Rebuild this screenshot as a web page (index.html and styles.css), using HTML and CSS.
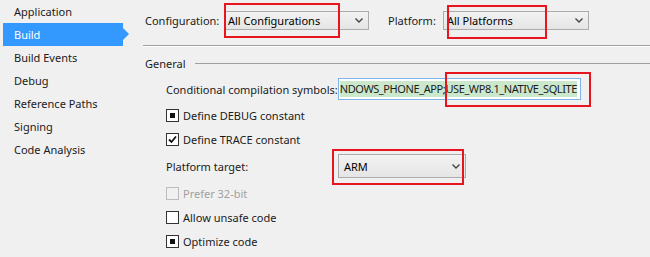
FILE: index.html
```html
<!DOCTYPE html>
<html lang="en">

<head>
    <meta charset="UTF-8">
    <meta name="viewport" content="width=device-width, initial-scale=1.0">
    <title>Build</title>

    <link rel="stylesheet" href="styles.css">
</head>

<body>
    <div class="page">
        <ul class="tabs">
            <li>Application</li>
            <li class="active">Build</li>
            <li>Build Events</li>
            <li>Debug</li>
            <li>Reference Paths</li>
            <li>Signing</li>
            <li>Code Analysis</li>
        </ul>

        <div class="main">
            <div class="toolbar">
                <span class="label">Configuration:</span>
                <div class="combo combo-config">
                    <span>All Configurations</span>
                    <svg class="chevron" width="8" height="5" viewBox="0 0 8 5"><path d="M0.5 0.5 L4 4 L7.5 0.5" fill="none" stroke="#444" stroke-width="1.4"/></svg>
                    <div class="mark mark-config"></div>
                </div>
                <span class="label label-platform">Platform:</span>
                <div class="combo combo-platform">
                    <span>All Platforms</span>
                    <svg class="chevron" width="8" height="5" viewBox="0 0 8 5"><path d="M0.5 0.5 L4 4 L7.5 0.5" fill="none" stroke="#444" stroke-width="1.4"/></svg>
                    <div class="mark mark-platform"></div>
                </div>
            </div>

            <div class="rule"></div>

            <div class="group-title">
                <span>General</span>
                <div class="group-line"></div>
            </div>

            <div class="settings">
                <div class="field">
                    <span class="field-label">Conditional compilation symbols:</span>
                    <div class="textbox">
                        <div class="textbox-inner">
                            <span class="selected">NDOWS_PHONE_APP;USE_WP8.1_NATIVE_SQLITE</span>
                        </div>
                        <div class="mark mark-symbols"></div>
                    </div>
                </div>

                <label class="check">
                    <span class="box box-square"></span>
                    Define DEBUG constant
                </label>
                <label class="check">
                    <span class="box">
                        <svg width="11" height="11" viewBox="0 0 11 11"><path d="M2 5.5 L4.5 8 L9 2.5" fill="none" stroke="#111" stroke-width="1.8"/></svg>
                    </span>
                    Define TRACE constant
                </label>

                <div class="field field-target">
                    <span class="field-label">Platform target:</span>
                    <div class="combo combo-target">
                        <span>ARM</span>
                        <svg class="chevron" width="8" height="5" viewBox="0 0 8 5"><path d="M0.5 0.5 L4 4 L7.5 0.5" fill="none" stroke="#444" stroke-width="1.4"/></svg>
                        <div class="mark mark-target"></div>
                    </div>
                </div>

                <label class="check disabled">
                    <span class="box"></span>
                    Prefer 32-bit
                </label>
                <label class="check">
                    <span class="box"></span>
                    Allow unsafe code
                </label>
                <label class="check">
                    <span class="box box-square"></span>
                    Optimize code
                </label>
            </div>
        </div>
    </div>
</body>

</html>
```

FILE: styles.css
```css
* {
    margin: 0;
    padding: 0;
    box-sizing: border-box;
}

body {
    width: 650px;
    height: 257px;
    overflow: hidden;
    color: #1b1b1b;
    font-size: 11px;
    font-family: "Segoe UI", "Noto Sans", sans-serif;
    background-color: #f0f0f0;
}

.page {
    display: flex;
    height: 257px;
}

/* 左侧标签 */
.tabs {
    width: 143px;
    flex-shrink: 0;
    list-style: none;
}

.tabs li {
    height: 23px;
    line-height: 23px;
    padding-left: 14px;
    white-space: nowrap;
}

.tabs li.active {
    position: relative;
    width: 120px;
    margin-left: 3px;
    padding-left: 11px;
    color: white;
    background-color: #3399ff;
}

.tabs li.active::after {
    content: "";
    position: absolute;
    top: 5px;
    right: -6px;
    border-top: 6px solid transparent;
    border-bottom: 6px solid transparent;
    border-left: 6px solid #3399ff;
}

.main {
    flex: 1;
    min-width: 0;
}

/* 顶部配置栏 */
.toolbar {
    display: flex;
    align-items: center;
    height: 19px;
    margin-top: 11px;
    padding-left: 2px;
}

.label {
    width: 79px;
}

.label-platform {
    width: 55px;
    margin-left: 19px;
}

.combo {
    position: relative;
    display: flex;
    align-items: center;
    justify-content: space-between;
    height: 19px;
    padding: 0 5px 0 3px;
    border: 1px solid #acacac;
    color: #000;
    background: linear-gradient(#f2f2f2, #e5e5e5);
}

.combo-config {
    width: 145px;
}

.combo-platform {
    width: 146px;
}

.combo-target {
    width: 128px;
    height: 24px;
    padding-left: 5px;
}

.mark {
    position: absolute;
    border: 2px solid #e8141e;
}

.mark-config {
    left: -1px;
    top: -9px;
    width: 116px;
    height: 35px;
}

.mark-platform {
    left: 3px;
    top: -7px;
    width: 100px;
    height: 34px;
}

.mark-symbols {
    left: 106px;
    top: -7px;
    width: 146px;
    height: 35px;
}

.mark-target {
    left: -7px;
    top: -6px;
    width: 132px;
    height: 36px;
}

.rule {
    height: 2px;
    margin-top: 15px;
    border-top: 1px solid #a0a0a0;
    border-bottom: 1px solid #ffffff;
}

.group-title {
    display: flex;
    align-items: center;
    height: 16px;
    margin-top: 8px;
    padding-left: 2px;
}

.group-line {
    flex: 1;
    height: 1px;
    margin-left: 9px;
    margin-top: 1px;
    background-color: #a0a0a0;
}

.settings {
    padding-left: 23px;
    padding-top: 7px;
}

.field {
    display: flex;
    align-items: center;
    height: 22px;
    margin-bottom: 3px;
}

.field-label {
    width: 172px;
    flex-shrink: 0;
}

.textbox {
    position: relative;
    width: 243px;
    height: 22px;
    padding: 2px 3px 2px 1px;
    border: 1px solid #7eb4ea;
    background-color: white;
}

.textbox-inner {
    display: flex;
    justify-content: flex-end;
    height: 16px;
}

.selected {
    flex: 1;
    line-height: 16px;
    color: #1b1b1b;
    letter-spacing: -0.4px;
    text-align: right;
    white-space: nowrap;
    background-color: #cce8cc;
}

.field-target {
    height: 30px;
    margin: 0;
}

/* 复选框 */
.check {
    display: flex;
    align-items: center;
    height: 24px;
}

.box {
    display: flex;
    align-items: center;
    justify-content: center;
    width: 13px;
    height: 13px;
    margin-right: 4px;
    border: 1px solid #333;
    background-color: white;
}

.box-square::before {
    content: "";
    width: 5px;
    height: 5px;
    background-color: #111;
}

.disabled {
    color: #a0a0a0;
}

.disabled .box {
    border-color: #bcbcbc;
    background-color: #f0f0f0;
}
```
